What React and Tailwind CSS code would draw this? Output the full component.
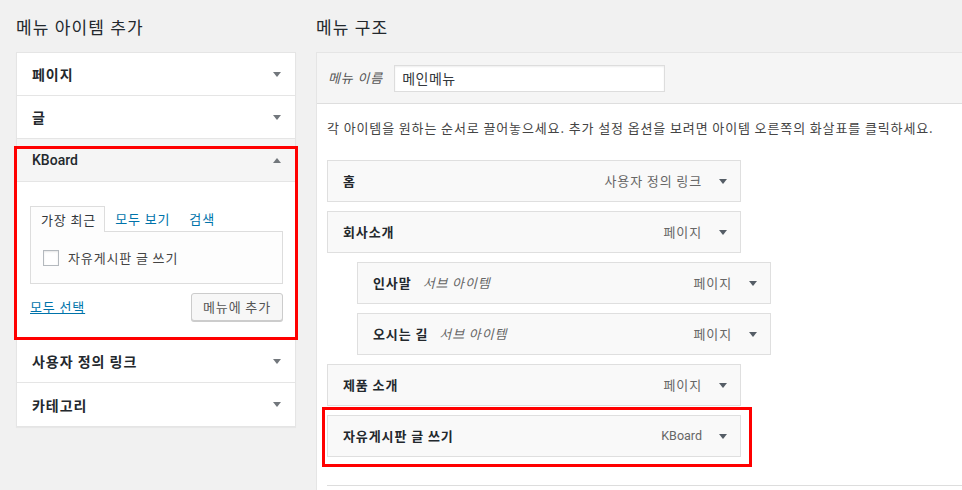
import React from "react";

function Arrow({ up = false, color = "#72777c" }) {
  return (
    <svg width="8" height="5" viewBox="0 0 8 5" className="shrink-0">
      {up ? (
        <polygon points="0,5 8,5 4,0" fill={color} />
      ) : (
        <polygon points="0,0 8,0 4,5" fill={color} />
      )}
    </svg>
  );
}

function Row({ title, last = false }) {
  return (
    <div
      className={
        "h-[43px] flex items-center justify-between pl-[15px] pr-[14px] " +
        (last ? "" : "border-b border-[#e5e5e5]")
      }
    >
      <span className="text-[14px] font-semibold text-[#23282d] leading-[20px] tracking-[0.07em]">{title}</span>
      <Arrow />
    </div>
  );
}

function MenuItem({ title, type, sub = false, highlight = false, latin = false }) {
  return (
    <div className={"relative " + (sub ? "ml-[30px]" : "")}>
      <div className="w-[414px] h-[42px] bg-[#f9f9f9] border border-[#dfdfdf] flex items-center pl-[15px] pr-[13px]">
        <span className="text-[13px] font-semibold text-[#23282d] leading-[20px] tracking-[0.07em]">{title}</span>
        {sub && (
          <span className="ml-[11px] text-[13px] italic text-[#666] leading-[20px]">서브 아이템</span>
        )}
        {latin ? (
          <span className="ml-auto text-[12.5px] text-[#666] leading-[20px] tracking-normal font-['Roboto',sans-serif]">{type}</span>
        ) : (
          <span className="ml-auto text-[13px] text-[#666] leading-[20px]">{type}</span>
        )}
        <span className="ml-[17px] flex items-center">
          <Arrow color="#555d66" />
        </span>
      </div>
      {highlight && (
        <div className="absolute left-[-5px] top-[-8px] w-[430px] h-[60px] border-[3px] border-[#ff0000] pointer-events-none" />
      )}
    </div>
  );
}

export default function App() {
  return (
    <div className="w-[962px] h-[490px] overflow-hidden bg-[#f1f1f1] flex font-['Noto_Sans_CJK_KR',sans-serif] tracking-[0.055em] text-[#444]">
      {/* Left column */}
      <div className="w-[296px] pl-[16px] shrink-0">
        <div className="h-[52px] flex items-center">
          <h2 className="text-[17px] text-[#23282d] leading-[24px] pt-[2px] tracking-[0.07em]">메뉴 아이템 추가</h2>
        </div>
        <div className="w-[280px] bg-white border border-[#e5e5e5] shadow-[0_1px_1px_rgba(0,0,0,0.04)]">
          <Row title="페이지" />
          <Row title="글" />
          {/* KBoard open section */}
          <div className="relative border-b border-[#e5e5e5]">
            <div className="h-[43px] flex items-center justify-between pl-[15px] pr-[14px] bg-[#f5f5f5] border-b border-[#e5e5e5]">
              <span className="text-[14px] font-medium text-[#23282d] leading-[20px] tracking-normal font-['Roboto',sans-serif]">KBoard</span>
              <Arrow up />
            </div>
            <div className="pt-[24px] pl-[13px] pr-[12px] pb-[18px]">
              <div className="flex h-[25px] text-[13px] leading-[20px]">
                <div className="pl-[10px] pr-[8px] h-[26px] -mb-px border border-b-0 border-[#dddddd] bg-[#fdfdfd] flex items-center text-[#32373c] relative z-10">
                  가장 최근
                </div>
                <div className="pl-[10px] pr-[9px] flex items-center text-[#0073aa]">모두 보기</div>
                <div className="pl-[10px] flex items-center text-[#0073aa]">검색</div>
              </div>
              <div className="h-[53px] border border-[#dddddd] bg-[#fdfdfd] flex items-center pl-[12px]">
                <span className="w-[16px] h-[16px] border border-[#b4b9be] bg-white shadow-[inset_0_1px_2px_rgba(0,0,0,0.1)]" />
                <span className="ml-[9px] text-[13px] text-[#444] leading-[20px]">자유게시판 글 쓰기</span>
              </div>
              <div className="mt-[9px] flex items-center justify-between">
                <a className="text-[13px] text-[#0073aa] underline leading-[20px]">모두 선택</a>
                <button className="w-[92px] h-[28px] bg-[#f7f7f7] border border-[#cccccc] rounded-[3px] shadow-[0_1px_0_#cccccc] text-[13px] text-[#555] leading-[20px]">
                  메뉴에 추가
                </button>
              </div>
            </div>
            <div className="absolute left-[-3px] top-[7px] w-[284px] h-[194px] border-[3px] border-[#ff0000] pointer-events-none" />
          </div>
          <Row title="사용자 정의 링크" />
          <Row title="카테고리" last />
        </div>
      </div>

      {/* Right column */}
      <div className="ml-[20px] w-[700px] shrink-0">
        <div className="h-[52px] flex items-center">
          <h2 className="text-[17px] text-[#23282d] leading-[24px] pt-[2px] tracking-[0.07em]">메뉴 구조</h2>
        </div>
        <div className="h-[438px] bg-white border-l border-t border-[#e5e5e5]">
          <div className="h-[51px] bg-[#f5f5f5] border-b border-[#dedede] flex items-center pl-[11px]">
            <span className="text-[13px] italic text-[#555] leading-[20px]">메뉴 이름</span>
            <div className="ml-[11px] w-[271px] h-[27px] bg-white border border-[#dddddd] shadow-[inset_0_1px_2px_rgba(0,0,0,0.07)] flex items-center pl-[7px]">
              <span className="text-[14px] text-[#32373c] leading-[20px] tracking-[0.035em]">메인메뉴</span>
            </div>
          </div>
          <div className="pl-[10px]">
            <p className="mt-[14px] text-[13px] text-[#444] leading-[20px] whitespace-nowrap">
              각 아이템을 원하는 순서로 끌어놓으세요. 추가 설정 옵션을 보려면 아이템 오른쪽의 화살표를 클릭하세요.
            </p>
            <div className="mt-[22px] flex flex-col gap-[9px]">
              <MenuItem title="홈" type="사용자 정의 링크" />
              <MenuItem title="회사소개" type="페이지" />
              <MenuItem title="인사말" type="페이지" sub />
              <MenuItem title="오시는 길" type="페이지" sub />
              <MenuItem title="제품 소개" type="페이지" />
              <MenuItem title="자유게시판 글 쓰기" type="KBoard" highlight latin />
            </div>
            <div className="mt-[28px] border-t border-[#dddddd] h-[10px]" />
          </div>
        </div>
      </div>
    </div>
  );
}
